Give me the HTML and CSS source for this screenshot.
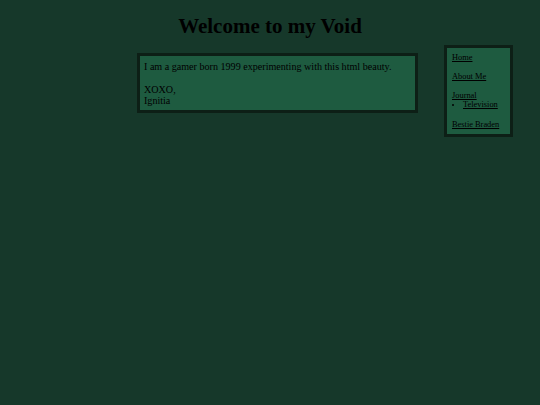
FILE: index.html
```html
<!DOCTYPE html>
<html>
<head>
<meta charset="utf-8">
<title>Welcome to my Void</title>
<link rel="stylesheet" href="styles.css">
</head>
<body>
<h1 class="title">Welcome to my Void</h1>
<div class="layout">
  <div class="main">
    <p>I am a gamer born 1999 experimenting with this html beauty.</p>
    <p>XOXO,<br>Ignitia</p>
  </div>
  <nav class="sidebar">
    <p><a href="#">Home</a></p>
    <p><a href="#">About Me</a></p>
    <div class="group">
      <a href="#">Journal</a>
      <ul>
        <li><a href="#">Television</a></li>
      </ul>
    </div>
    <p><a href="#">Bestie Braden</a></p>
  </nav>
</div>
</body>
</html>
```
FILE: styles.css
```css
html, body {
  margin: 0;
  padding: 0;
}
body {
  background: #16382a;
  color: #000;
  font-family: "Liberation Serif", "Times New Roman", serif;
  width: 540px;
  min-height: 405px;
}
.title {
  margin: 0;
  padding-top: 13px;
  font-size: 21px;
  line-height: 26px;
  text-align: center;
  font-weight: bold;
}
.layout {
  display: flex;
  align-items: flex-start;
  margin-top: 6px;
  padding-left: 137px;
}
.main {
  margin-top: 8px;
  width: 267px;
  background: #1e5b40;
  border: 3px solid #0d1f16;
  padding: 4.5px 4px 3.5px 4px;
  font-size: 10.1px;
  line-height: 11.5px;
}
.main p {
  margin: 0;
}
.main p + p {
  margin-top: 11.5px;
}
.sidebar {
  margin-left: 26px;
  width: 53px;
  background: #1e5b40;
  border: 3px solid #0d1f16;
  padding: 4.5px 5px 4px 5px;
  font-size: 8.4px;
  line-height: 9.5px;
}
.sidebar p {
  margin: 0 0 9.5px 0;
}
.sidebar p:last-child {
  margin-bottom: 0;
}
.sidebar a {
  color: #000;
}
.group {
  margin-bottom: 10.5px;
}
.group ul {
  margin: 0;
  padding-left: 11px;
}
```
